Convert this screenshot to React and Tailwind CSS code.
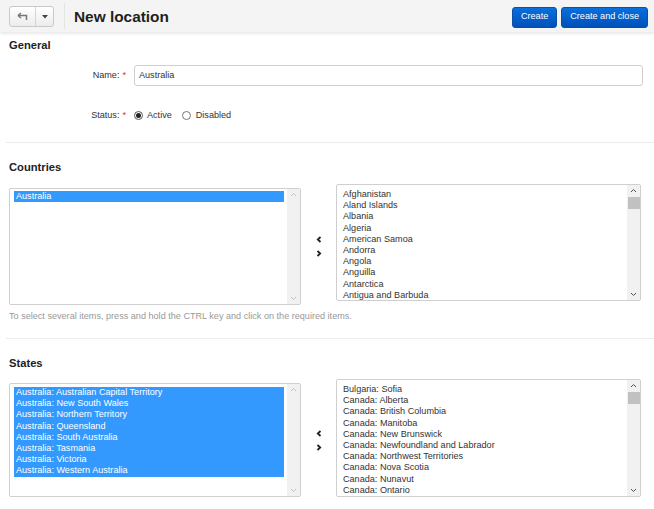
import React from "react";

const font = { fontFamily: '"Liberation Sans", Arial, sans-serif' };

const countries = [
  "Afghanistan",
  "Aland Islands",
  "Albania",
  "Algeria",
  "American Samoa",
  "Andorra",
  "Angola",
  "Anguilla",
  "Antarctica",
  "Antigua and Barbuda",
  "Argentina",
];

const selectedStates = [
  "Australia: Australian Capital Territory",
  "Australia: New South Wales",
  "Australia: Northern Territory",
  "Australia: Queensland",
  "Australia: South Australia",
  "Australia: Tasmania",
  "Australia: Victoria",
  "Australia: Western Australia",
];

const otherStates = [
  "Bulgaria: Sofia",
  "Canada: Alberta",
  "Canada: British Columbia",
  "Canada: Manitoba",
  "Canada: New Brunswick",
  "Canada: Newfoundland and Labrador",
  "Canada: Northwest Territories",
  "Canada: Nova Scotia",
  "Canada: Nunavut",
  "Canada: Ontario",
  "Canada: Prince Edward Island",
];

function Chevron({ dir, className }) {
  return (
    <svg width="7" height="5" viewBox="0 0 7 5" className={className}>
      {dir === "up" ? (
        <path d="M1 4 L3.5 1.5 L6 4" fill="none" stroke="currentColor" strokeWidth="1" />
      ) : (
        <path d="M1 1 L3.5 3.5 L6 1" fill="none" stroke="currentColor" strokeWidth="1" />
      )}
    </svg>
  );
}

function Scrollbar({ active }) {
  return (
    <div className="w-[13px] bg-[#f1f1f1] flex flex-col items-center justify-between py-[3px]">
      <div className="flex flex-col items-center w-full">
        <Chevron dir="up" className={active ? "text-[#505050]" : "text-[#c3c3c3]"} />
        {active && <div className="mt-[4px] w-[12px] h-[12px] bg-[#c1c1c1]" />}
      </div>
      <Chevron dir="down" className={active ? "text-[#505050]" : "text-[#c3c3c3]"} />
    </div>
  );
}

function ListBox({ items, selected, className, active, padTop }) {
  return (
    <div className={`border border-[#cfcfcf] rounded-[2px] flex bg-white overflow-hidden ${className}`}>
      <div className={`flex-1 overflow-hidden pl-[4px] pr-[3px] ${padTop}`}>
        {selected && selected.length > 0 && (
          <div className="bg-[#3399ff] text-white">
            {selected.map((s) => (
              <div key={s} className="px-[2px] text-[9.1px] leading-[11.2px] whitespace-nowrap">
                {s}
              </div>
            ))}
          </div>
        )}
        {items &&
          items.map((s) => (
            <div key={s} className="px-[2px] text-[9.1px] leading-[11.2px] text-[#333] whitespace-nowrap">
              {s}
            </div>
          ))}
      </div>
      <Scrollbar active={active} />
    </div>
  );
}

function Arrows({ className }) {
  return (
    <div className={`w-[35px] flex flex-col items-center justify-center gap-[7px] ${className}`}>
      <svg width="6" height="7" viewBox="0 0 6 7">
        <path d="M4.5 1 L1.8 3.5 L4.5 6" fill="none" stroke="#222" strokeWidth="1.8" />
      </svg>
      <svg width="6" height="7" viewBox="0 0 6 7">
        <path d="M1.5 1 L4.2 3.5 L1.5 6" fill="none" stroke="#222" strokeWidth="1.8" />
      </svg>
    </div>
  );
}

export default function App() {
  return (
    <div style={font} className="w-[654px] h-[509px] bg-white overflow-hidden text-[#333]">
      {/* Header */}
      <div className="h-[32px] bg-[#f4f4f4] shadow-[0_2px_3px_rgba(0,0,0,0.09)] flex items-center pl-[9px] pr-[6px] relative">
        <div className="mt-[1px] flex h-[21px] border border-[#c9c9c9] rounded-[3px] bg-gradient-to-b from-white to-[#ececec] overflow-hidden">
          <div className="w-[26px] flex items-center justify-center border-r border-[#d4d4d4]">
            <svg width="12" height="9" viewBox="0 0 12 9">
              <path d="M1 3.5 L4 1 M1 3.5 L4 6" fill="none" stroke="#777" strokeWidth="1.5" />
              <path d="M1.5 3.5 H9.5 V8" fill="none" stroke="#777" strokeWidth="1.5" />
            </svg>
          </div>
          <div className="w-[17px] flex items-center justify-center">
            <svg width="6" height="4" viewBox="0 0 6 4">
              <path d="M0 0 H6 L3 3.5 Z" fill="#444" />
            </svg>
          </div>
        </div>
        <div className="w-px h-[26px] bg-[#e4e4e4] ml-[10px]" />
        <div className="ml-[9px] mt-[1px] text-[15.4px] font-bold text-[#1f1f1f]">New location</div>
        <div className="flex-1" />
        <button className="mt-[2px] h-[21px] px-[8px] rounded-[3px] bg-gradient-to-b from-[#0b6fdc] to-[#0050b9] border border-[#0a4fa8] text-white text-[9.1px]">
          Create
        </button>
        <button className="mt-[2px] ml-[4px] h-[21px] px-[8px] rounded-[3px] bg-gradient-to-b from-[#0b6fdc] to-[#0050b9] border border-[#0a4fa8] text-white text-[9.1px]">
          Create and close
        </button>
      </div>

      {/* General */}
      <div className="pl-[9px]">
        <div className="mt-[6px] h-[14px] text-[11.2px] leading-[14px] font-bold text-[#222]">General</div>

        <div className="mt-[13px] flex items-center">
          <div className="w-[117px] text-right text-[9.1px] text-[#333] pt-[1px]">
            Name:<span className="text-[#e3342f] ml-[3px]">*</span>
          </div>
          <div className="ml-[8px] w-[509px] h-[21px] border border-[#cfcfcf] rounded-[3px] flex items-center pl-[4px] pt-[1px] text-[9.1px] text-[#333]">
            Australia
          </div>
        </div>

        <div className="mt-[23px] h-[14px] flex items-center">
          <div className="w-[117px] text-right text-[9.1px] text-[#333]">
            Status:<span className="text-[#e3342f] ml-[3px]">*</span>
          </div>
          <div className="ml-[8px] flex items-center text-[9.1px]">
            <div className="w-[9px] h-[9px] rounded-full border border-[#555] flex items-center justify-center">
              <div className="w-[5px] h-[5px] rounded-full bg-[#222]" />
            </div>
            <span className="ml-[4px]">Active</span>
            <div className="ml-[10px] w-[9px] h-[9px] rounded-full border border-[#777]" />
            <span className="ml-[5px]">Disabled</span>
          </div>
        </div>
      </div>

      <div className="mt-[19px] ml-[6px] h-px bg-[#ececec]" />

      {/* Countries */}
      <div className="pl-[9px]">
        <div className="mt-[17px] h-[14px] text-[11.2px] leading-[14px] font-bold text-[#222]">Countries</div>
        <div className="mt-[10px] flex items-start">
          <ListBox className="mt-[4px] w-[292px] h-[117px]" padTop="pt-[2px]" selected={["Australia"]} />
          <Arrows className="mt-[4px] h-[117px]" />
          <ListBox className="w-[305px] h-[117px]" padTop="pt-[4px]" items={countries} active />
        </div>
        <div className="mt-[5px] h-[12px] text-[9.1px] leading-[12px] text-[#999]">
          To select several items, press and hold the CTRL key and click on the required items.
        </div>
      </div>

      <div className="mt-[16px] ml-[6px] h-px bg-[#ececec]" />

      {/* States */}
      <div className="pl-[9px]">
        <div className="mt-[17px] h-[14px] text-[11.2px] leading-[14px] font-bold text-[#222]">States</div>
        <div className="mt-[9px] flex items-start">
          <ListBox className="mt-[4px] w-[292px] h-[114px]" padTop="pt-[3px]" selected={selectedStates} />
          <Arrows className="mt-[4px] h-[114px]" />
          <ListBox className="w-[305px] h-[118px]" padTop="pt-[4px]" items={otherStates} active />
        </div>
      </div>
    </div>
  );
}
